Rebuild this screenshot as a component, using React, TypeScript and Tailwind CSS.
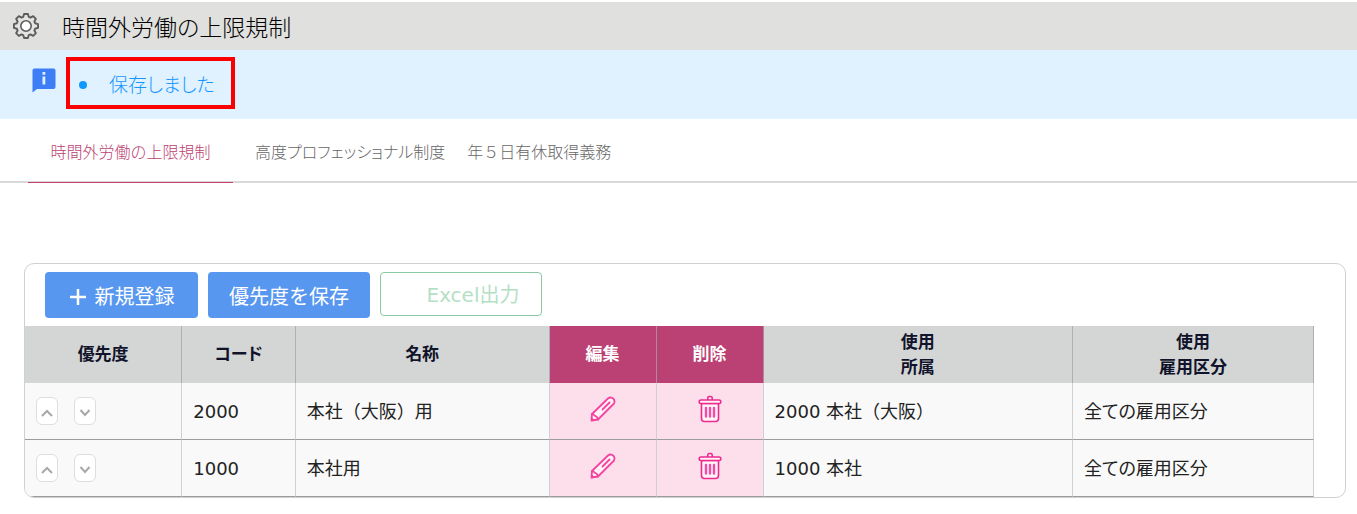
import { Fragment } from "react";

const TABS = [
	{ id: "overtime", label: "時間外労働の上限規制" },
	{ id: "professional", label: "高度プロフェッショナル制度" },
	{ id: "leave", label: "年５日有休取得義務" },
];

const COLUMNS = [
	{ id: "priority", lines: ["優先度"], accent: false },
	{ id: "code", lines: ["コード"], accent: false },
	{ id: "name", lines: ["名称"], accent: false },
	{ id: "edit", lines: ["編集"], accent: true },
	{ id: "delete", lines: ["削除"], accent: true },
	{ id: "department", lines: ["使用", "所属"], accent: false },
	{ id: "employment", lines: ["使用", "雇用区分"], accent: false },
];

const ROWS = [
	{
		code: "2000",
		name: "本社（大阪）用",
		department: "2000 本社（大阪）",
		employment: "全ての雇用区分",
	},
	{
		code: "1000",
		name: "本社用",
		department: "1000 本社",
		employment: "全ての雇用区分",
	},
];

// eight teeth, four corners each: [degrees from the tooth's axis, radius]
const TOOTH = [
	[-17, 9.5],
	[-9, 12.2],
	[9, 12.2],
	[17, 9.5],
];

const GEAR_POINTS = Array.from({ length: 8 }, (_, tooth) =>
	TOOTH.map(([offset, radius]) => {
		const angle = ((tooth * 45 + offset) * Math.PI) / 180;
		return `${14 + radius * Math.sin(angle)},${14 - radius * Math.cos(angle)}`;
	}).join(" ")
).join(" ");

function GearIcon() {
	return (
		<svg
			viewBox="0 0 28 28"
			className="h-7 w-7 shrink-0"
			stroke="#5c5c5c"
			strokeWidth="1.9"
			strokeLinejoin="round"
			aria-hidden="true"
		>
			<polygon points={GEAR_POINTS} fill="#e4e4e2" />
			<circle cx="14" cy="14" r="5.2" fill="#fff" strokeWidth="1.6" />
		</svg>
	);
}

function InfoIcon() {
	return (
		<svg viewBox="0 0 24 25" className="h-[25px] w-6 shrink-0" aria-hidden="true">
			<path
				d="M2.5 0.5h19a2 2 0 0 1 2 2v16.500a2 2 0 0 1-2 2H5L0.500 24.500V2.500a2 2 0 0 1 2-2z"
				fill="#3d7df5"
			/>
			<path d="M10.500 4h2.800v2.800h-2.800zM10.500 8.500h2.800v8h-2.800z" fill="#e0f1ff" />
		</svg>
	);
}

function PencilIcon() {
	return (
		<svg
			viewBox="0 0 26 26"
			className="h-[26px] w-[26px]"
			fill="#fff3f8"
			stroke="#f5439f"
			strokeWidth="1.8"
			strokeLinecap="round"
			strokeLinejoin="round"
			aria-hidden="true"
		>
			<path d="M1.500 24.500L2 18L18 2.500Q20 0.800 22.500 2Q25.500 4 24 7.500L8 23.500z" />
			<path d="M2 18Q3.500 18 4.500 19.500Q7.500 20.500 8 23.500" />
			<path d="M12.500 13.500L19.500 6.500" fill="none" />
			<path d="M1.500 24.500L2 22L4 24z" fill="#f5439f" strokeWidth="1" />
		</svg>
	);
}

function TrashIcon() {
	return (
		<svg
			viewBox="0 0 24 28"
			className="h-7 w-6"
			fill="#fff3f8"
			stroke="#ee2a8f"
			strokeWidth="1.6"
			strokeLinecap="round"
			strokeLinejoin="round"
			aria-hidden="true"
		>
			<path d="M3.500 8.500v15q0 3 3 3h11q3 0 3-3v-15z" />
			<path d="M9.800 5V3q0-1.500 1.500-1.500h1.400q1.500 0 1.500 1.500v2" />
			<rect x="1.200" y="5" width="21.600" height="3.500" rx="1.700" />
			<path d="M8 13v8.500M12 13v8.500M16 13v8.500" stroke="#f34ca4" strokeWidth="2.400" />
		</svg>
	);
}

function MoveButton({ label, path }: { label: string; path: string }) {
	return (
		<button
			type="button"
			aria-label={label}
			className="flex h-7 w-[22px] items-center justify-center rounded-md border border-[#dedede] bg-white"
		>
			<svg viewBox="0 0 12 8" className="mt-1 h-2 w-3" fill="none" stroke="#a8a8a8" strokeWidth="2" aria-hidden="true">
				<path d={path} />
			</svg>
		</button>
	);
}

export default function App() {
	return (
		<main className="bg-white pt-0.5 font-['DejaVu_Sans','Noto_Sans_CJK_JP',sans-serif] text-[#222]">
			<header className="flex h-12 items-center gap-[22px] bg-[#e0e0de] pl-3">
				<GearIcon />
				<h1 className="pt-1 text-[23px] leading-8 font-light text-black [font-feature-settings:'palt']">
					時間外労働の上限規制
				</h1>
			</header>

			<section role="status" className="flex h-[69px] items-start gap-2.5 bg-[#e0f1ff] pt-[7px] pl-8">
				<div className="pt-[11px]">
					<InfoIcon />
				</div>
				<ul className="flex h-[52px] w-[169px] items-center border-4 border-[#fa0000] pt-1 pl-[9px]">
					<li className="flex items-center gap-[22px] text-[19px] font-light text-[#1596ff] [font-feature-settings:'palt']">
						<span className="h-2 w-2 rounded-full bg-[#0d99ff]" />
						保存しました
					</li>
				</ul>
			</section>

			<nav className="flex h-16 border-b-2 border-[#d9d9d9] pl-7 text-[16px] font-light">
				{TABS.map((tab, index) => (
					<a
						key={tab.id}
						href={`#${tab.id}`}
						className={
							index === 0
								? "-mb-0.5 flex w-[205px] items-center justify-center border-b border-[#c2416f] pt-1 text-[#bc3f70]"
								: index === 1
									? "flex items-center pt-1.5 pl-[22px] text-[#666] [font-feature-settings:'palt']"
									: "flex items-center pt-1.5 pl-[22px] text-[#666]"
						}
					>
						{tab.label}
					</a>
				))}
			</nav>

			<section className="mt-20 mr-[11px] ml-6 overflow-hidden rounded-[10px] border border-[#d0d0d0]">
				<div className="flex items-start gap-2.5 pt-2 pb-2 pl-5 text-[20px]">
					<button
						type="button"
						className="flex h-[46px] w-[153px] items-center justify-center gap-2 rounded bg-[#5897f0] pt-1 text-white"
					>
						<svg viewBox="0 0 18 18" className="h-[18px] w-[18px]" stroke="currentColor" strokeWidth="2.5" aria-hidden="true">
							<path d="M9 1v16M1 9h16" />
						</svg>
						新規登録
					</button>
					<button
						type="button"
						className="h-[46px] w-[162px] rounded bg-[#5897f0] pt-1 text-white"
					>
						優先度を保存
					</button>
					<button
						type="button"
						disabled
						className="h-11 w-[162px] rounded border border-[#8cc8a4] pt-0.5 pl-6 text-[#b5dfc4]"
					>
						Excel出力
					</button>
				</div>

				<div className="pr-[31px]">
					<table className="w-full table-fixed border-separate border-spacing-0 text-[18px]">
						<colgroup>
							<col className="w-[12.200%]" />
							<col className="w-[8.800%]" />
							<col className="w-[19.700%]" />
							<col className="w-[8.300%]" />
							<col className="w-[8.300%]" />
							<col className="w-[24%]" />
							<col />
						</colgroup>
						<thead>
							<tr className="h-[57px]">
								{COLUMNS.map((column) => (
									<th
										key={column.id}
										scope="col"
										className={
											column.accent
												? "border-r border-[#b08a98] bg-[#bb4174] p-0 text-[17px] leading-[25px] font-bold text-white"
												: "border-r border-[#aeb0af] bg-[#d4d6d5] p-0 text-[17px] leading-[25px] font-bold text-[#11132b] [font-feature-settings:'palt']"
										}
									>
										{column.lines.map((line, index) => (
											<Fragment key={line}>
												{index > 0 && <br />}
												{line}
											</Fragment>
										))}
									</th>
								))}
							</tr>
						</thead>
						<tbody className="[&_td]:border-r [&_td]:border-b [&_td]:border-r-[#d0d0d0] [&_td]:border-b-[#9c9c9c]">
							{ROWS.map((row) => (
								<tr key={row.code} className="h-[57px] bg-[#f9f9f9]">
									<td className="px-[11px] py-0">
										<div className="flex gap-4">
											<MoveButton label="優先度を上げる" path="M1 7l5-5 5 5" />
											<MoveButton label="優先度を下げる" path="M1.500 1l4.500 5 4.500-5" />
										</div>
									</td>
									<td className="px-[11px] py-0">{row.code}</td>
									<td className="px-[11px] py-0">{row.name}</td>
									<td className="bg-[#fcdfeb] p-0">
										<button type="button" aria-label="編集" className="mx-auto block pb-1">
											<PencilIcon />
										</button>
									</td>
									<td className="bg-[#fcdfeb] p-0">
										<button type="button" aria-label="削除" className="mx-auto block pb-1">
											<TrashIcon />
										</button>
									</td>
									<td className="px-[11px] py-0">{row.department}</td>
									<td className="px-[11px] py-0 [font-feature-settings:'palt']">{row.employment}</td>
								</tr>
							))}
						</tbody>
					</table>
				</div>
			</section>
		</main>
	);
}
